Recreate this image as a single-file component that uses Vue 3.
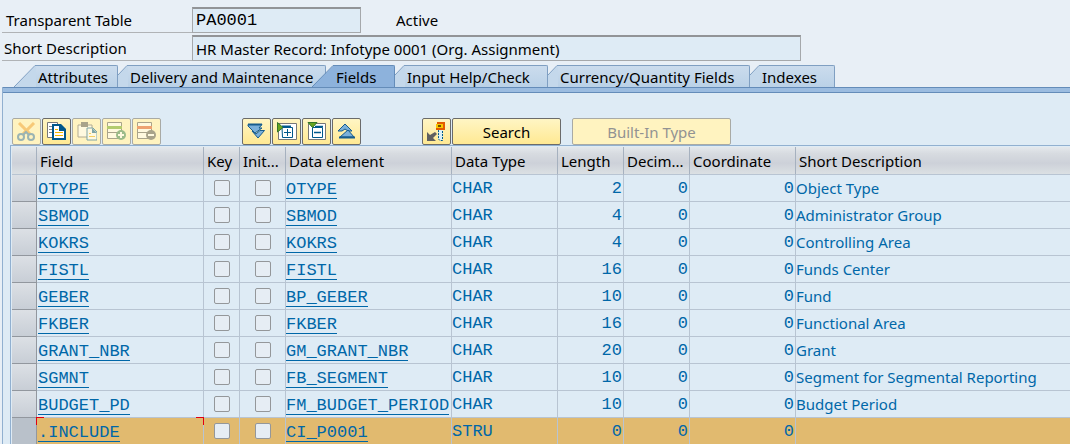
<script setup>
const tabs = ['Attributes', 'Delivery and Maintenance', 'Fields', 'Input Help/Check', 'Currency/Quantity Fields', 'Indexes']
const columns = ['Field', 'Key', 'Init...', 'Data element', 'Data Type', 'Length', 'Decim...', 'Coordinate', 'Short Description']
const rows = [
  ['OTYPE', 'OTYPE', 'CHAR', 2, 'Object Type'],
  ['SBMOD', 'SBMOD', 'CHAR', 4, 'Administrator Group'],
  ['KOKRS', 'KOKRS', 'CHAR', 4, 'Controlling Area'],
  ['FISTL', 'FISTL', 'CHAR', 16, 'Funds Center'],
  ['GEBER', 'BP_GEBER', 'CHAR', 10, 'Fund'],
  ['FKBER', 'FKBER', 'CHAR', 16, 'Functional Area'],
  ['GRANT_NBR', 'GM_GRANT_NBR', 'CHAR', 20, 'Grant'],
  ['SGMNT', 'FB_SEGMENT', 'CHAR', 10, 'Segment for Segmental Reporting'],
  ['BUDGET_PD', 'FM_BUDGET_PERIOD', 'CHAR', 10, 'Budget Period'],
  ['.INCLUDE', 'CI_P0001', 'STRU', 0, ''],
]
</script>

<template>
  <main class="page">
    <form class="head" @submit.prevent>
      <div class="line">
        <label class="caption indent" for="table">Transparent Table</label>
        <input id="table" class="text mono short" value="PA0001" readonly>
        <span class="status">Active</span>
      </div>
      <div class="line">
        <label class="caption" for="desc">Short Description</label>
        <input id="desc" class="text" value="HR Master Record: Infotype 0001 (Org. Assignment)" readonly>
      </div>
    </form>

    <nav class="tabs">
      <button v-for="t in tabs" :key="t" type="button" class="tab" :class="{ active: t === 'Fields' }">
        <svg v-if="t === 'Fields' || t === 'Attributes'" class="cap" width="22" height="22" viewBox="0 0 22 22">
          <path class="cap-fill" d="M0 22L21 1H22V22Z" />
          <path class="cap-line" d="M0 22L21 .5H22" />
        </svg>
        <svg v-else class="cap" width="10" height="22" viewBox="0 0 10 22">
          <path class="cap-fill" d="M0 10L9 1H10V22H0Z" />
          <path class="cap-line" d="M0 10L9 .5H10" />
        </svg>
        <span class="tab-body">{{ t }}</span>
      </button>
    </nav>

    <section class="panel">
      <div class="toolbar">
        <div class="group">
          <button type="button" class="tool" aria-label="Cut" disabled>
            <svg width="20" height="20" viewBox="0 0 20 20">
              <path d="M2 1L13 12M17 1L6 12" stroke="#f0a030" stroke-width="3" fill="none" />
              <circle cx="4" cy="15" r="3" fill="none" stroke="#3a76a8" stroke-width="2" />
              <circle cx="14" cy="15" r="3" fill="none" stroke="#3a76a8" stroke-width="2" />
              <path d="M6 13L9 10L12 13" stroke="#3a76a8" stroke-width="2" fill="none" />
            </svg>
          </button>
          <button type="button" class="tool" aria-label="Copy">
            <svg width="20" height="20" viewBox="0 0 20 20">
              <path d="M.5 .5H10.500V15.500H.5Z" fill="#fff" stroke="#777" />
              <path d="M2 4.500H5M2 7.500H5M2 10.500H5" stroke="#888" />
              <path d="M6 3H13L18 8V17H6Z" fill="#fff" stroke="#00588c" stroke-width="2" />
              <path d="M12 2V9H19V7L14 2Z" fill="#00588c" />
              <path d="M8 7.500H11M8 10.500H16M8 13.500H16" stroke="#f5b800" />
            </svg>
          </button>
          <button type="button" class="tool" aria-label="Paste" disabled>
            <svg width="20" height="20" viewBox="0 0 20 20">
              <path d="M1 3H15V15H1Z" fill="#fff" stroke="#666" stroke-width="1" />
              <path d="M4 0H11V5H4Z" fill="#555" />
              <path d="M10 6H16L20 10V18H10Z" fill="#fff" stroke="#00588c" />
              <path d="M15 6V11H20" fill="#00588c" />
              <path d="M12 11.500H14M12 14.500H18" stroke="#f0ab00" />
            </svg>
          </button>
          <button type="button" class="tool" aria-label="Insert Row" disabled>
            <svg width="20" height="20" viewBox="0 0 20 20">
              <path d="M.5 .5H14.500V16.500H.5ZM.5 10.500H14" fill="#fff" stroke="#555" />
              <path d="M0 4H15V7H0Z" fill="#69a51e" />
              <circle cx="14" cy="13" r="5" fill="#3b8454" />
              <path d="M11 13H17M14 10V16" stroke="#fff" stroke-width="2" />
            </svg>
          </button>
          <button type="button" class="tool" aria-label="Delete Row" disabled>
            <svg width="20" height="20" viewBox="0 0 20 20">
              <path d="M.5 .5H14.500V16.500H.5ZM.5 10.500H14" fill="#fff" stroke="#555" />
              <path d="M0 4H15V7H0Z" fill="#df5424" />
              <circle cx="14" cy="13" r="5" fill="#555" />
              <path d="M11 13H17" stroke="#fff" stroke-width="2" />
            </svg>
          </button>
        </div>
        <div class="group">
          <button type="button" class="tool" aria-label="Expand All">
            <svg width="20" height="20" viewBox="0 0 20 20">
              <path d="M1 2.500H15L12 6H15L8 11L1 4Z" fill="#7bb0da" stroke="#175c8e" />
              <path d="M1 2.500H15" stroke="#175c8e" stroke-width="2" />
              <path d="M5 9L9 12L13 8.500H17.500L11 16Z" fill="#7bb0da" stroke="#175c8e" />
            </svg>
          </button>
          <button type="button" class="tool" aria-label="Expand Include">
            <svg width="20" height="20" viewBox="0 0 20 20">
              <path d="M1.500 1.500H19.500V17.500H1.500Z" fill="#fff" stroke="#777" />
              <path d="M5 5.500H15.500V15.500H5.500Z" fill="#fff" stroke="#00588c" />
              <path d="M5 4.500H14" stroke="#00588c" stroke-width="2" />
              <path d="M7 10.500H14M10.500 7V14" stroke="#00588c" />
              <path d="M.5 .5L6 5.500L.5 10Z" fill="#69a51e" stroke="#34762a" />
            </svg>
          </button>
          <button type="button" class="tool" aria-label="Collapse Include">
            <svg width="20" height="20" viewBox="0 0 20 20">
              <path d="M1.500 1.500H18.500V17.500H1.500Z" fill="#fff" stroke="#777" />
              <path d="M5.500 5.500H15.500V15.500H5.500Z" fill="#fff" stroke="#00588c" />
              <path d="M8 4.500H16M7 10.500H14" stroke="#00588c" stroke-width="1.500" />
              <path d="M1 .5H10L5.500 5.500Z" fill="#69a51e" stroke="#34762a" />
            </svg>
          </button>
          <button type="button" class="tool" aria-label="Collapse All">
            <svg width="20" height="20" viewBox="0 0 20 20">
              <path d="M1 9L8 2L15 9H11L8 7L5 9Z" fill="#7bb0da" stroke="#175c8e" />
              <path d="M3 15L11 8L17 15Z" fill="#7bb0da" stroke="#175c8e" />
              <path d="M2 15.500H18" stroke="#175c8e" stroke-width="2" />
            </svg>
          </button>
        </div>
        <div class="group">
          <button type="button" class="tool" aria-label="Foreign Key">
            <svg width="20" height="20" viewBox="0 0 20 20">
              <path d="M0 10V19H9L6 16L10 12L8 10L3 13Z" fill="#606060" />
              <path d="M11.500 7H15.500V18.500H13L11.500 17Z" fill="#d9effa" stroke="#00588c" stroke-dasharray="2 1" />
              <path d="M9 2H17V7H9Z" fill="#f9c800" />
              <path d="M17 0V8M10 1H18M9 7H17" stroke="#e35b00" stroke-width="2" />
              <path d="M11 3H14V5H11Z" fill="#705000" />
            </svg>
          </button>
          <button type="button" class="tool wide search">Search</button>
        </div>
        <button type="button" class="tool wide builtin" disabled>Built-In Type</button>
      </div>

      <div class="grid">
        <table>
          <colgroup>
            <col class="c-sel"><col class="c-field"><col class="c-key"><col class="c-init"><col class="c-elem">
            <col class="c-type"><col class="c-num"><col class="c-num"><col class="c-type"><col>
          </colgroup>
          <thead>
            <tr>
              <th class="sel" aria-label="Select"></th>
              <th v-for="c in columns" :key="c" scope="col">{{ c }}</th>
            </tr>
          </thead>
          <tbody>
            <tr v-for="r in rows" :key="r[0]" :class="{ current: r[0] === '.INCLUDE' }">
              <td class="sel"></td>
              <td class="mono field"><a href="#">{{ r[0] }}</a></td>
              <td class="check"><input type="checkbox" :aria-label="'Key ' + r[0]"></td>
              <td class="check"><input type="checkbox" :aria-label="'Initial ' + r[0]"></td>
              <td class="mono"><a href="#">{{ r[1] }}</a></td>
              <td class="mono">{{ r[2] }}</td>
              <td class="mono num">{{ r[3] }}</td>
              <td class="mono num">0</td>
              <td class="mono num">0</td>
              <td>{{ r[4] }}</td>
            </tr>
          </tbody>
        </table>
      </div>
    </section>
  </main>
</template>

<style>
body { background: #e8eff6; }
</style>

<style scoped>
.page { box-sizing: border-box; padding: 7px 0 0 2px; font: 15px/20px "Noto Sans", "Open Sans", sans-serif; color: #000; overflow: hidden; }
.page * { box-sizing: border-box; }
button, input { font: inherit; color: inherit; margin: 0; padding: 0; border-radius: 0; }
.mono, input.mono { font-family: "Liberation Mono", monospace; font-size: 17px; }
.head { display: flex; flex-direction: column; gap: 2px; }
.line { display: flex; align-items: flex-end; height: 26px; }
.caption { width: 190px; height: 26px; line-height: 26px; padding-left: 2px; border-bottom: 1px solid #b0b3b6; }
.caption.indent { padding-left: 4px; }
.text { width: 609px; height: 26px; padding: 0 3px; background: #deebf5; border: 1px solid #a5a8ab; border-top: 2px solid #929497; outline: 0; }
.short { width: 169px; }
.status { margin-left: 35px; line-height: 26px; }

.tabs { display: grid; grid-template-columns: 104px 208px 69px 153px 202px 85px; padding: 4px 0 0 12px; height: 26px; }
.tab { position: relative; display: flex; height: 22px; background: none; border: 0; white-space: nowrap; text-align: left; }
.tab.active { margin-left: -14px; z-index: 1; }
.cap { flex: none; display: block; }
.cap-fill { fill: #c4d8eb; }
.cap-line { fill: none; stroke: #7f9fc2; }
.tab-body { flex: 1; height: 22px; line-height: 22px; padding-left: 2px; background: linear-gradient(#cbdced, #bad1e7); border-top: 1px solid #7f9fc2; border-right: 1px solid #7f9fc2; border-top-right-radius: 2px; }
.active .tab-body { background: #8db2dc; border-color: #648cb9; }
.active .cap-fill { fill: #8db2dc; }
.active .cap-line { stroke: #648cb9; }

.panel { border-left: 1px solid #91b0d0; background: #deebf5; padding: 27px 0 0 7px; position: relative; }
.panel::before { content: ""; position: absolute; top: 0; left: 0; right: 0; height: 4px; background: #9bbce0; border-top: 1px solid #648cb9; border-bottom: 1px solid #648cb9; }
.toolbar { display: flex; padding: 4px 0 0 2px; }
.group { display: flex; gap: 1px; }
.group:nth-child(2) { margin-left: 81px; }
.group:nth-child(3) { margin-left: 61px; }
.tool { display: flex; align-items: center; justify-content: center; width: 29px; height: 27px; border: 1px solid #6b6b6b; border-radius: 2px; background: linear-gradient(#fff5c4, #ffe993); }
.tool:disabled { border-color: #a9aaa5; background: #fff3c0; color: #929292; }
.tool:disabled svg { opacity: .5; }
.wide { width: 109px; }
.builtin { width: 159px; margin-left: 11px; }

.grid { border: 1px solid #91b0d0; border-width: 1px 0 0 1px; padding: 1px 0 0 1px; }
table { width: 100%; table-layout: fixed; border-collapse: separate; border-spacing: 0; }
.c-sel { width: 25px; }
.c-field { width: 167px; }
.c-key { width: 36px; }
.c-init { width: 46px; }
.c-elem { width: 166px; }
.c-type { width: 106px; }
.c-num { width: 66px; }
th { height: 28px; padding: 0 0 0 3px; font-weight: 400; text-align: left; white-space: nowrap; background: linear-gradient(#e4e8ec, #d7dbe0 25%, #cdd1d9 60%, #dbe0e3); border-right: 1px solid #a6b1bf; border-bottom: 1px solid #b8c4d2; overflow: hidden; }
td { height: 27px; padding: 0; color: #0067a8; white-space: nowrap; border-right: 1px solid #b8c4d2; border-bottom: 1px solid #b8c4d2; line-height: 20px; }
td.mono { padding-top: 2px; }
th:last-child, td:last-child { border-right: 0; }
td.sel { background: linear-gradient(#dce0e5, #c8ced6); border-right: 1px solid #92979e; border-bottom: 1px solid #92979e; }
td a { display: block; width: max-content; height: 19px; line-height: 20px; color: inherit; text-decoration: none; border-bottom: 1px solid #0067a8; }
td.num { text-align: right; padding-right: 1px; }
.check { text-align: center; padding: 0; }
.check input { appearance: none; display: block; width: 16px; height: 16px; margin: 0 auto; background: #e6edf4; border: 1px solid #94979a; border-radius: 2px; }
.current td { background: #e1ba6f; }
.current td.sel { background: #b9c1ca; }
td.field { position: relative; padding-left: 1px; }
.current .field::before, .current .field::after { content: ""; position: absolute; z-index: 1; top: -1px; width: 7px; height: 7px; border-top: 1px solid #e00010; }
.current .field::before { left: -1px; border-left: 1px solid #e00010; }
.current .field::after { right: -1px; border-right: 1px solid #e00010; }
</style>
